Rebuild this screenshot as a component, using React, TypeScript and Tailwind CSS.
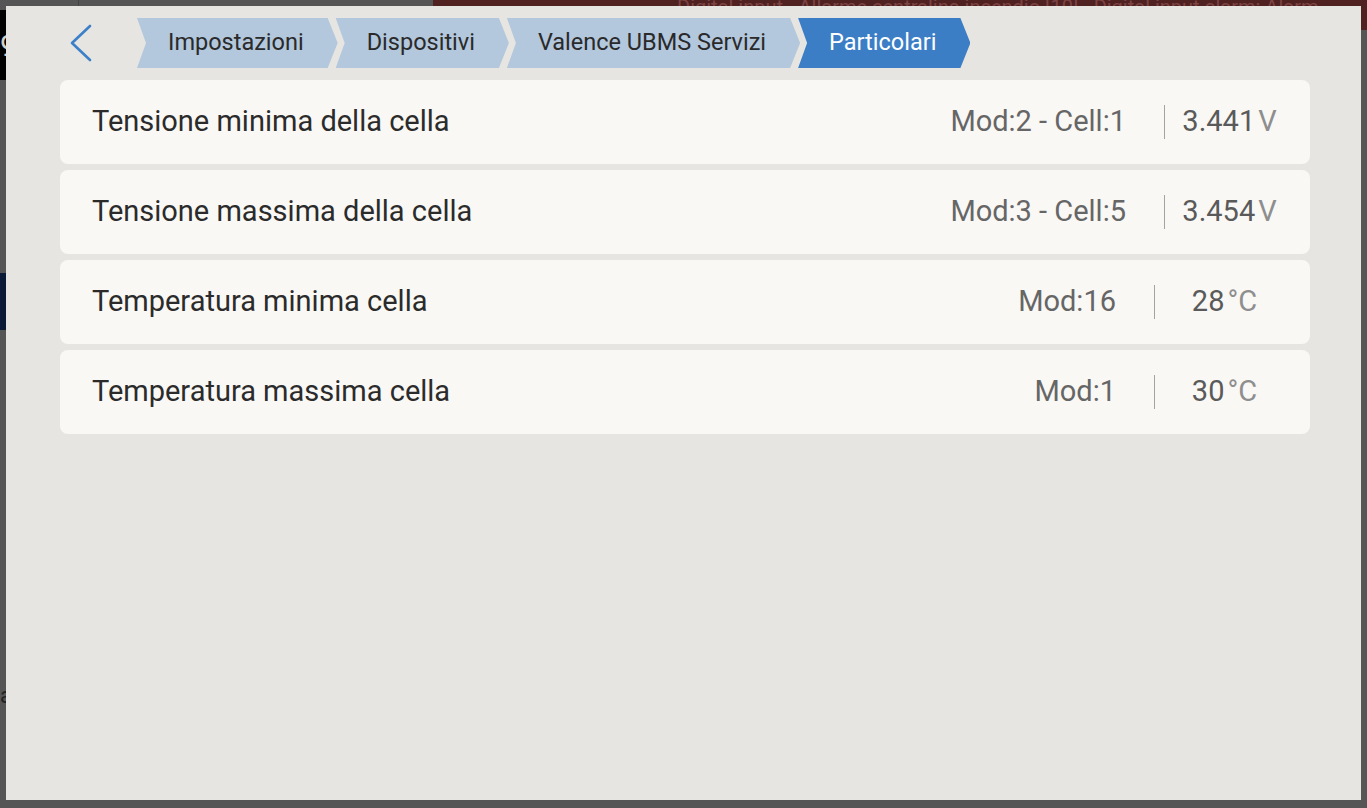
const crumbs = [
  { label: "Impostazioni", active: false },
  { label: "Dispositivi", active: false },
  { label: "Valence UBMS Servizi", active: false },
  { label: "Particolari", active: true },
];

type Row = {
  label: string;
  where: string;
  value: string;
  unit: string;
  box: string;
};

const rows: Row[] = [
  { label: "Tensione minima della cella", where: "Mod:2 - Cell:1", value: "3.441", unit: "V", box: "w-[129px]" },
  { label: "Tensione massima della cella", where: "Mod:3 - Cell:5", value: "3.454", unit: "V", box: "w-[129px]" },
  { label: "Temperatura minima cella", where: "Mod:16", value: "28", unit: "°C", box: "w-[139px]" },
  { label: "Temperatura massima cella", where: "Mod:1", value: "30", unit: "°C", box: "w-[139px]" },
];

export default function App() {
  return (
    <div className="relative h-[808px] w-[1367px] overflow-hidden bg-[#555555] font-['Roboto',sans-serif]">
      {/* page behind the dialog */}
      <div className="flex h-[80px]">
        <div className="mt-[10px] flex w-[78px] items-center bg-black text-[30px] text-[#cfcfcf]">
          9
        </div>
        <div className="w-[355px] border-l border-[#444]" />
        <div className="h-[44px] flex-1 overflow-hidden bg-[#4f2121] pl-[244px] text-[20px] leading-[30px] whitespace-nowrap text-[#7e4343] [margin-top:-14px]">
          <div className="pt-[6px]">
            Digital input - Allarme centralina incendio [10] - Digital input alarm: Alarm
          </div>
        </div>
      </div>
      <div className="mt-[193px] h-[57px] w-[78px] bg-[#0a1a36]" />
      <div className="mt-[355px] text-[22px] leading-none text-[#222]">a</div>

      {/* dialog */}
      <div className="absolute top-[6px] right-[6px] bottom-[8px] left-[6px] flex flex-col bg-[#e6e5e1] pt-[12px] pr-[51px] pl-[54px]">
        <div className="flex h-[50px] items-center">
          <button className="mr-[43px] ml-[8px] flex h-[50px] w-[26px] items-center justify-center">
            <svg width="24" height="38" viewBox="0 0 24 38" fill="none">
              <path
                d="M21 2 L3 19 L21 36"
                stroke="#3b80c8"
                strokeWidth="2.6"
                strokeLinecap="round"
                strokeLinejoin="round"
              />
            </svg>
          </button>
          <div className="flex items-center">
            {crumbs.map((c, i) => (
              <div
                key={c.label}
                className={`flex h-[50px] items-center pr-[34px] pl-[31px] text-[23.5px] whitespace-nowrap [clip-path:polygon(0_0,calc(100%-10px)_0,100%_50%,calc(100%-10px)_100%,0_100%,9px_50%)] ${
                  i === 0 ? "" : "-ml-[2px]"
                } ${c.active ? "bg-[#3b7ec6] text-white" : "bg-[#b3c7dd] text-[#2a2a2a]"}`}
              >
                {c.label}
              </div>
            ))}
          </div>
        </div>

        <div className="mt-[12px] flex flex-col gap-[6px]">
          {rows.map((r) => (
            <div
              key={r.label}
              className="flex h-[84px] items-center rounded-[8px] bg-[#f9f8f5] pr-[16px] pl-[32px]"
            >
              <div className="flex-1 text-[29px] text-[#2b2b2b]">{r.label}</div>
              <div className="text-[29px] text-[#666666]">{r.where}</div>
              <div className="ml-[38px] h-[34px] w-px bg-[#a3a3a3]" />
              <div className={`${r.box} text-center text-[29px] whitespace-nowrap`}>
                <span className="text-[#5a5a5a]">{r.value}</span>
                <span className="ml-[3px] text-[#8e8e8e]">{r.unit}</span>
              </div>
            </div>
          ))}
        </div>
      </div>
    </div>
  );
}
